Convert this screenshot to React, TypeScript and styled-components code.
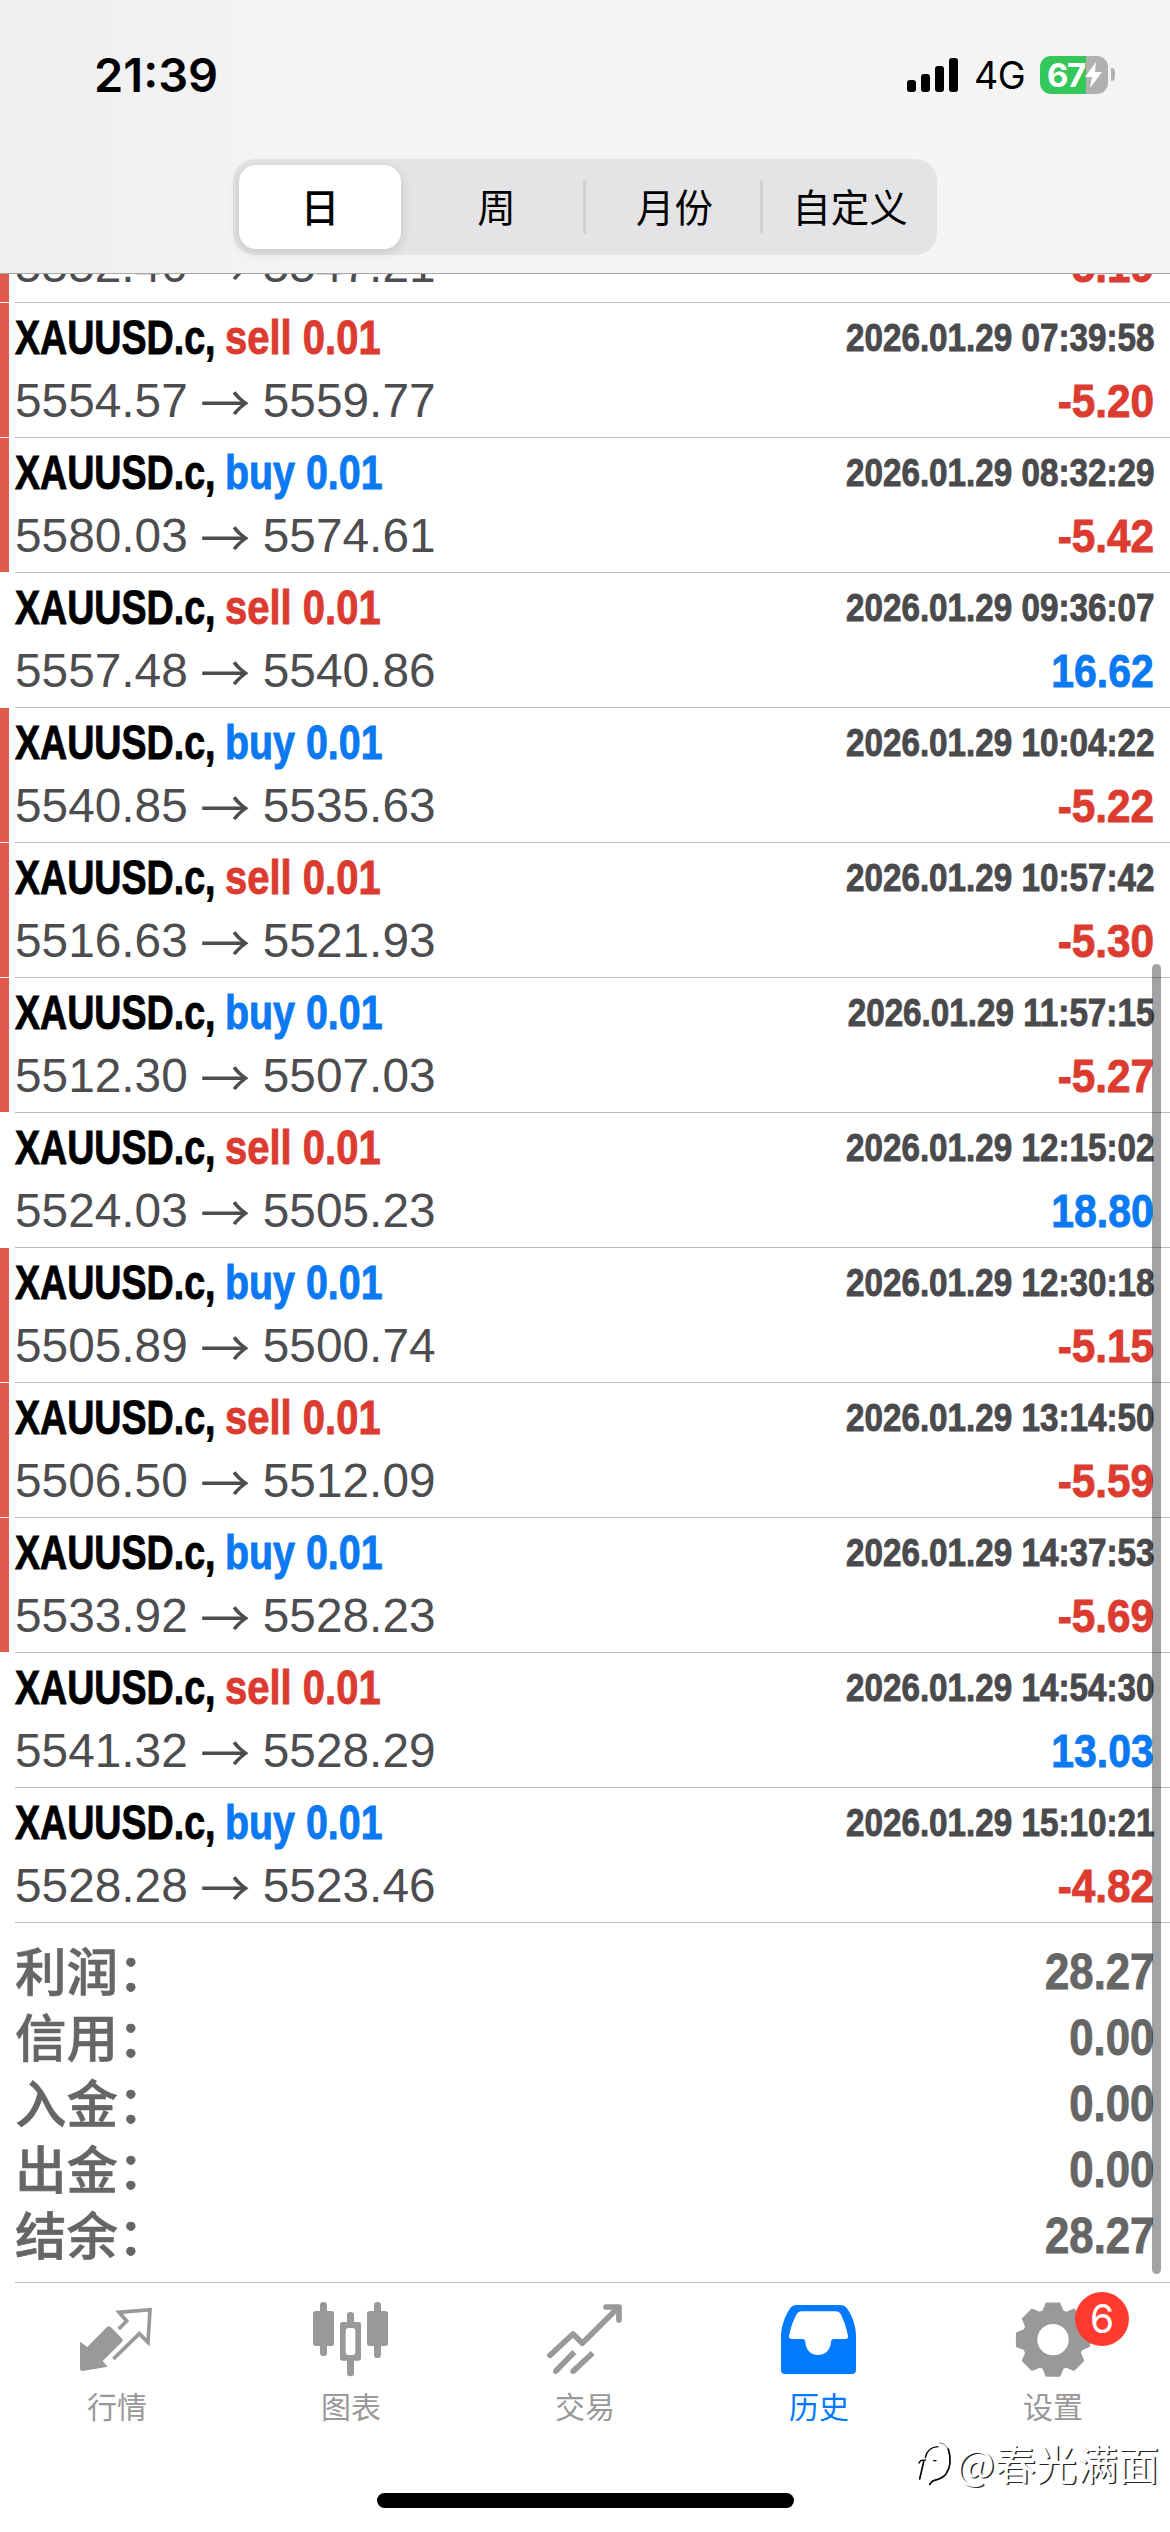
import React from "react";
import styled, { createGlobalStyle } from "styled-components";

const SANS = `"Liberation Sans", "Noto Sans CJK SC", sans-serif`;
const UI = `Inter, "Noto Sans CJK SC", sans-serif`;
const CJK = `"Noto Sans CJK SC", sans-serif`;

const RED = "#dc3b30";
const BLUE = "#0a79f2";

const GlobalStyle = createGlobalStyle`
  *, *::before, *::after { box-sizing: border-box; }
  body { margin: 0; background: #fff; }
`;

const Screen = styled.div`
  position: relative;
  display: flex;
  flex-direction: column;
  width: 1170px;
  height: 2532px;
  overflow: hidden;
  background: #fff;
  font-family: ${SANS};
`;

const Header = styled.header`
  display: flex;
  flex-direction: column;
  align-items: center;
  height: 274px;
  flex: none;
  border-bottom: 1px solid #a6a6a8;
  background: linear-gradient(90deg, #f1f0ee 0%, #f1f0f1 8%, #f3f3f5 20%, #f5f5f5 34%, #f5f5f5 80%, #f5f3f3 100%);
`;

const StatusBar = styled.div`
  display: flex;
  align-items: center;
  width: 100%;
  height: 159px;
  padding: 0 55px 10px 94px;
`;

const Clock = styled.time`
  flex: 1;
  font: 600 47px/60px ${UI};
  color: #000;
`;

const Bars = styled.div`
  display: flex;
  align-items: flex-end;
  gap: 5px;
  margin-right: 16px;
`;

const Bar = styled.i<{ $h: number }>`
  width: 9px;
  height: ${(p) => p.$h}px;
  border-radius: 3px;
  background: #000;
`;

const Network = styled.span`
  width: 66px;
  font: 400 37.5px/44px ${UI};
  letter-spacing: -0.5px;
  padding-top: 2px;
`;

const Battery = styled.div`
  display: flex;
  align-items: center;
  width: 68px;
  height: 38px;
  padding-left: 7px;
  border-radius: 11px;
  background: linear-gradient(90deg, #34c759 0 46px, #b0b0b0 46px);
  color: #fff;
  font: 700 33px/38px ${UI};
  letter-spacing: -1.5px;
`;

const BatteryTip = styled.i`
  width: 4px;
  height: 13px;
  margin-left: 3px;
  border-radius: 0 5px 5px 0;
  background: #b0b0b0;
`;

const Segments = styled.nav`
  display: grid;
  grid-template-columns: 174px 179px 177px 174px;
  width: 704px;
  height: 96px;
  border-radius: 22px;
  background: #e4e4e6;
`;

const Segment = styled.button<{ $active?: boolean; $rule?: boolean }>`
  position: relative;
  border: 0;
  padding: 0 0 5px;
  margin: ${(p) => (p.$active ? "6px 6px 6px 6px" : "0")};
  border-radius: 17px;
  background: ${(p) => (p.$active ? "#fff" : "transparent")};
  box-shadow: ${(p) => (p.$active ? "0 3px 12px rgba(0,0,0,0.14)" : "none")};
  color: #000;
  font: ${(p) => (p.$active ? 500 : 400)} 38.5px/50px ${CJK};

  &::after {
    content: "";
    display: ${(p) => (p.$rule ? "block" : "none")};
    position: absolute;
    right: 0;
    top: 21px;
    width: 3px;
    height: 54px;
    border-radius: 2px;
    background: #d0d0d2;
  }
`;

const History = styled.main`
  flex: 1;
  min-height: 0;
  overflow: hidden;
`;

const Row = styled.article<{ $partial: boolean }>`
  display: flex;
  height: ${(p) => (p.$partial ? 29 : 135)}px;
`;

const Stripe = styled.i<{ $on: boolean }>`
  width: 9px;
  margin: 0 6px 1px 0;
  background: ${(p) => (p.$on ? "#e05b4e" : "transparent")};
`;

const RowBody = styled.div`
  flex: 1;
  display: flex;
  flex-direction: column;
  justify-content: flex-end;
  padding: 0 16px 5px 0;
  border-bottom: 1px solid #bcbcbe;
`;

const Line = styled.div`
  display: flex;
  flex: none;
  height: 63px;
  line-height: 63px;
  white-space: nowrap;
`;

const Condensed = styled.span<{ $size: number; $scale: number; $color: string; $right?: boolean; $w?: number }>`
  display: block;
  width: ${(p) => (p.$w ? `${p.$w}px` : "auto")};
  margin-left: ${(p) => (p.$right ? "auto" : 0)};
  transform: scaleX(${(p) => p.$scale});
  transform-origin: ${(p) => (p.$right ? "right" : "left")} center;
  color: ${(p) => p.$color};
  font-size: ${(p) => p.$size}px;
  font-weight: 700;
  -webkit-text-stroke: 0.9px currentColor;
`;

const Prices = styled.span`
  display: flex;
  color: #4d4d50;
  font-size: 47.8px;
`;

const Arrow = styled.span`
  display: flex;
  justify-content: center;
  width: 75px;
  font-family: ${CJK};
  font-size: 50px;
`;

const Summary = styled.dl`
  margin: 0;
  padding: 13px 16px 0 15px;
`;

const SummaryRow = styled.div`
  display: flex;
  height: 66px;
  line-height: 66px;
`;

const SummaryLabel = styled.dt`
  color: #666;
  font: 500 51.5px/66px ${CJK};
  -webkit-text-stroke: 0.6px currentColor;
`;

const SummaryValue = styled.dd`
  margin: 0 0 0 auto;
  padding-top: 3px;
`;

const ScrollThumb = styled.div`
  position: absolute;
  left: 1152px;
  top: 964px;
  width: 9px;
  height: 1310px;
  border-radius: 5px;
  background: rgba(0, 0, 0, 0.36);
`;

const Tabs = styled.nav`
  display: grid;
  grid-template-columns: repeat(5, 234px);
  height: 250px;
  flex: none;
  background: linear-gradient(#bcbcbe, #bcbcbe) 15px 0 / 100% 1px no-repeat;
`;

const Tab = styled.a<{ $active?: boolean }>`
  position: relative;
  display: flex;
  flex-direction: column;
  align-items: center;
  padding-top: 16px;
  color: ${(p) => (p.$active ? "#007aff" : "#999")};
  font: 400 30px/44px ${CJK};

  svg { display: block; margin-bottom: 5px; }
`;

const Badge = styled.span`
  position: absolute;
  left: 139px;
  top: 10px;
  width: 54px;
  height: 54px;
  border-radius: 50%;
  background: #ff3b30;
  color: #fff;
  text-align: center;
  font: 400 39px/54px ${UI};
`;

const HomeIndicator = styled.div`
  position: absolute;
  left: 377px;
  top: 2493px;
  width: 417px;
  height: 15px;
  border-radius: 8px;
  background: #000;
`;

const Watermark = styled.div`
  position: absolute;
  left: 916px;
  top: 2434px;
  display: flex;
  align-items: center;
  color: #fff;
  font: 400 41px/56px ${CJK};
  white-space: nowrap;
  text-shadow: 1.5px 1px 0.5px rgba(0, 0, 0, 0.85);
`;

type Deal = [side: "sell" | "buy", open: string, close: string, time: string, profit: string];

const deals: Deal[] = [
  ["buy", "5552.40", "5547.21", "", "-5.19"],
  ["sell", "5554.57", "5559.77", "2026.01.29 07:39:58", "-5.20"],
  ["buy", "5580.03", "5574.61", "2026.01.29 08:32:29", "-5.42"],
  ["sell", "5557.48", "5540.86", "2026.01.29 09:36:07", "16.62"],
  ["buy", "5540.85", "5535.63", "2026.01.29 10:04:22", "-5.22"],
  ["sell", "5516.63", "5521.93", "2026.01.29 10:57:42", "-5.30"],
  ["buy", "5512.30", "5507.03", "2026.01.29 11:57:15", "-5.27"],
  ["sell", "5524.03", "5505.23", "2026.01.29 12:15:02", "18.80"],
  ["buy", "5505.89", "5500.74", "2026.01.29 12:30:18", "-5.15"],
  ["sell", "5506.50", "5512.09", "2026.01.29 13:14:50", "-5.59"],
  ["buy", "5533.92", "5528.23", "2026.01.29 14:37:53", "-5.69"],
  ["sell", "5541.32", "5528.29", "2026.01.29 14:54:30", "13.03"],
  ["buy", "5528.28", "5523.46", "2026.01.29 15:10:21", "-4.82"],
];

const totals = [
  ["利润：", "28.27"],
  ["信用：", "0.00"],
  ["入金：", "0.00"],
  ["出金：", "0.00"],
  ["结余：", "28.27"],
];

function DealRow({ deal, partial }: { deal: Deal; partial: boolean }) {
  const [side, open, close, time, profit] = deal;
  const loss = profit.startsWith("-");
  const striped = loss && profit !== "-4.82";
  return (
    <Row $partial={partial}>
      <Stripe $on={striped} />
      <RowBody>
        {!partial && (
          <Line>
            <Condensed $size={48} $scale={0.783} $color="#000" $w={210}>XAUUSD.c,</Condensed>
            <Condensed $size={48} $scale={side === "sell" ? 0.833 : 0.82} $color={side === "sell" ? RED : BLUE}>
              {side} 0.01
            </Condensed>
            <Condensed $size={38.5} $scale={0.863} $color="#4a4a4d" $right>{time}</Condensed>
          </Line>
        )}
        <Line>
          <Prices>
            {open}
            <Arrow>→</Arrow>
            {close}
          </Prices>
          <Condensed $size={47} $scale={loss ? 0.9 : 0.87} $color={loss ? RED : BLUE} $right>{profit}</Condensed>
        </Line>
      </RowBody>
    </Row>
  );
}

const QuotesIcon = () => (
  <svg width="80" height="80" viewBox="231 84 240 240">
    <path d="M240 215L262 231L320 172Q326 165 333 172L365 205Q371 211 365 217L308 273L323 290L248 303Q240 304 240 296Z" fill="currentColor" />
    <path d="M356 177L380 153L357 127L450 119L444 217L418 191L340 267" fill="none" stroke="currentColor" strokeWidth="11" />
  </svg>
);

const ChartIcon = () => (
  <svg width="80" height="80" viewBox="933 84 240 240" fill="currentColor">
    <rect x="960" y="96" width="21" height="162" rx="10" />
    <rect x="939" y="123" width="63" height="105" rx="8" />
    <rect x="1041" y="126" width="21" height="48" rx="10" />
    <rect x="1041" y="258" width="21" height="61" rx="10" />
    <path fillRule="evenodd" d="M1028 156H1075Q1083 156 1083 164V264Q1083 272 1075 272H1028Q1020 272 1020 264V164Q1020 156 1028 156ZM1046 174Q1037 174 1037 183V245Q1037 255 1046 255H1057Q1066 255 1066 245V183Q1066 174 1057 174Z" />
    <rect x="1122" y="96" width="21" height="168" rx="10" />
    <rect x="1101" y="123" width="63" height="105" rx="8" />
  </svg>
);

const TradeIcon = () => (
  <svg width="80" height="80" viewBox="435 84 240 240" fill="none" stroke="currentColor" strokeWidth="17" strokeLinejoin="round">
    <path d="M450 256L519 192L547 220L648 119" strokeLinecap="round" />
    <path d="M618 111H657V150" strokeLinecap="round" />
    <path d="M467 304L523 246M519 304L578 249" />
    <circle cx="467" cy="304" r="8" fill="currentColor" stroke="none" />
    <circle cx="519" cy="304" r="8" fill="currentColor" stroke="none" />
  </svg>
);

const HistoryIcon = () => (
  <svg width="80" height="80" viewBox="1137 84 240 240" fill="currentColor">
    <path
      fillRule="evenodd"
      d="M1155 312Q1143 312 1143 300V195C1145 160 1160 130 1171 114Q1178 105 1190 105H1322Q1333 105 1340 114C1352 130 1367 160 1368 195V300Q1368 312 1356 312ZM1204 124Q1194 124 1190 132C1180 150 1171 175 1167 198Q1166 207 1175 207H1208Q1215 207 1216 215C1217 268 1291 268 1293 215Q1294 207 1300 207H1336Q1345 207 1344 198C1340 175 1331 150 1322 132Q1318 124 1308 124Z"
    />
  </svg>
);

const gearPoints = Array.from({ length: 8 }, (_, tooth) =>
  [[-18.5, 89], [-10, 109], [10, 109], [18.5, 89]].map(([offset, radius]) => {
    const a = ((tooth * 45 + offset) * Math.PI) / 180;
    return `${(759 + Math.sin(a) * radius).toFixed(1)},${(209 - Math.cos(a) * radius).toFixed(1)}`;
  }).join(" ")
).join(" ");

const SettingsIcon = () => (
  <svg width="80" height="80" viewBox="639 84 240 240">
    <polygon points={gearPoints} fill="currentColor" stroke="currentColor" strokeWidth="8" strokeLinejoin="round" />
    <circle cx="759" cy="209" r="47" fill="#fff" />
  </svg>
);

const BoltIcon = () => (
  <svg width="17" height="26" viewBox="0 0 17 26">
    <path d="M11 0L0 15H7L5 26L17 10H10Z" fill="#fff" />
  </svg>
);

const WatermarkLogo = () => (
  <svg width="40" height="50" viewBox="48 72 120 150" fill="none" stroke="#000" strokeLinecap="round">
    <path d="M57 150L62 143L76 141" strokeWidth="4" />
    <path d="M71 146L59 198" strokeWidth="5" />
    <path d="M76 134C80 114 92 102 114 101" strokeWidth="4" />
    <path d="M118 90C130 91 140 97 145 110" strokeWidth="1.5" />
    <path d="M145 108C154 138 150 166 138 183C126 199 108 200 98 204L89 214" strokeWidth="5" />
    <path d="M101 143H108" strokeWidth="4" />
  </svg>
);

export default function App() {
  return (
    <>
      <GlobalStyle />
      <Screen>
        <Header>
          <StatusBar>
            <Clock>21:39</Clock>
            <Bars>
              <Bar $h={12} />
              <Bar $h={18} />
              <Bar $h={26} />
              <Bar $h={34} />
            </Bars>
            <Network>4G</Network>
            <Battery>
              67
              <BoltIcon />
            </Battery>
            <BatteryTip />
          </StatusBar>
          <Segments>
            <Segment $active>日</Segment>
            <Segment $rule>周</Segment>
            <Segment $rule>月份</Segment>
            <Segment>自定义</Segment>
          </Segments>
        </Header>
        <History>
          {deals.map((deal, index) => (
            <DealRow key={deal[1]} deal={deal} partial={index === 0} />
          ))}
          <Summary>
            {totals.map(([label, value]) => (
              <SummaryRow key={label}>
                <SummaryLabel>{label}</SummaryLabel>
                <SummaryValue>
                  <Condensed $size={50.5} $scale={0.865} $color="#666" $right>{value}</Condensed>
                </SummaryValue>
              </SummaryRow>
            ))}
          </Summary>
        </History>
        <Tabs>
          <Tab><QuotesIcon />行情</Tab>
          <Tab><ChartIcon />图表</Tab>
          <Tab><TradeIcon />交易</Tab>
          <Tab $active><HistoryIcon />历史</Tab>
          <Tab><SettingsIcon />设置<Badge>6</Badge></Tab>
        </Tabs>
        <ScrollThumb />
        <HomeIndicator />
        <Watermark>
          <WatermarkLogo />
          @春光满面
        </Watermark>
      </Screen>
    </>
  );
}
